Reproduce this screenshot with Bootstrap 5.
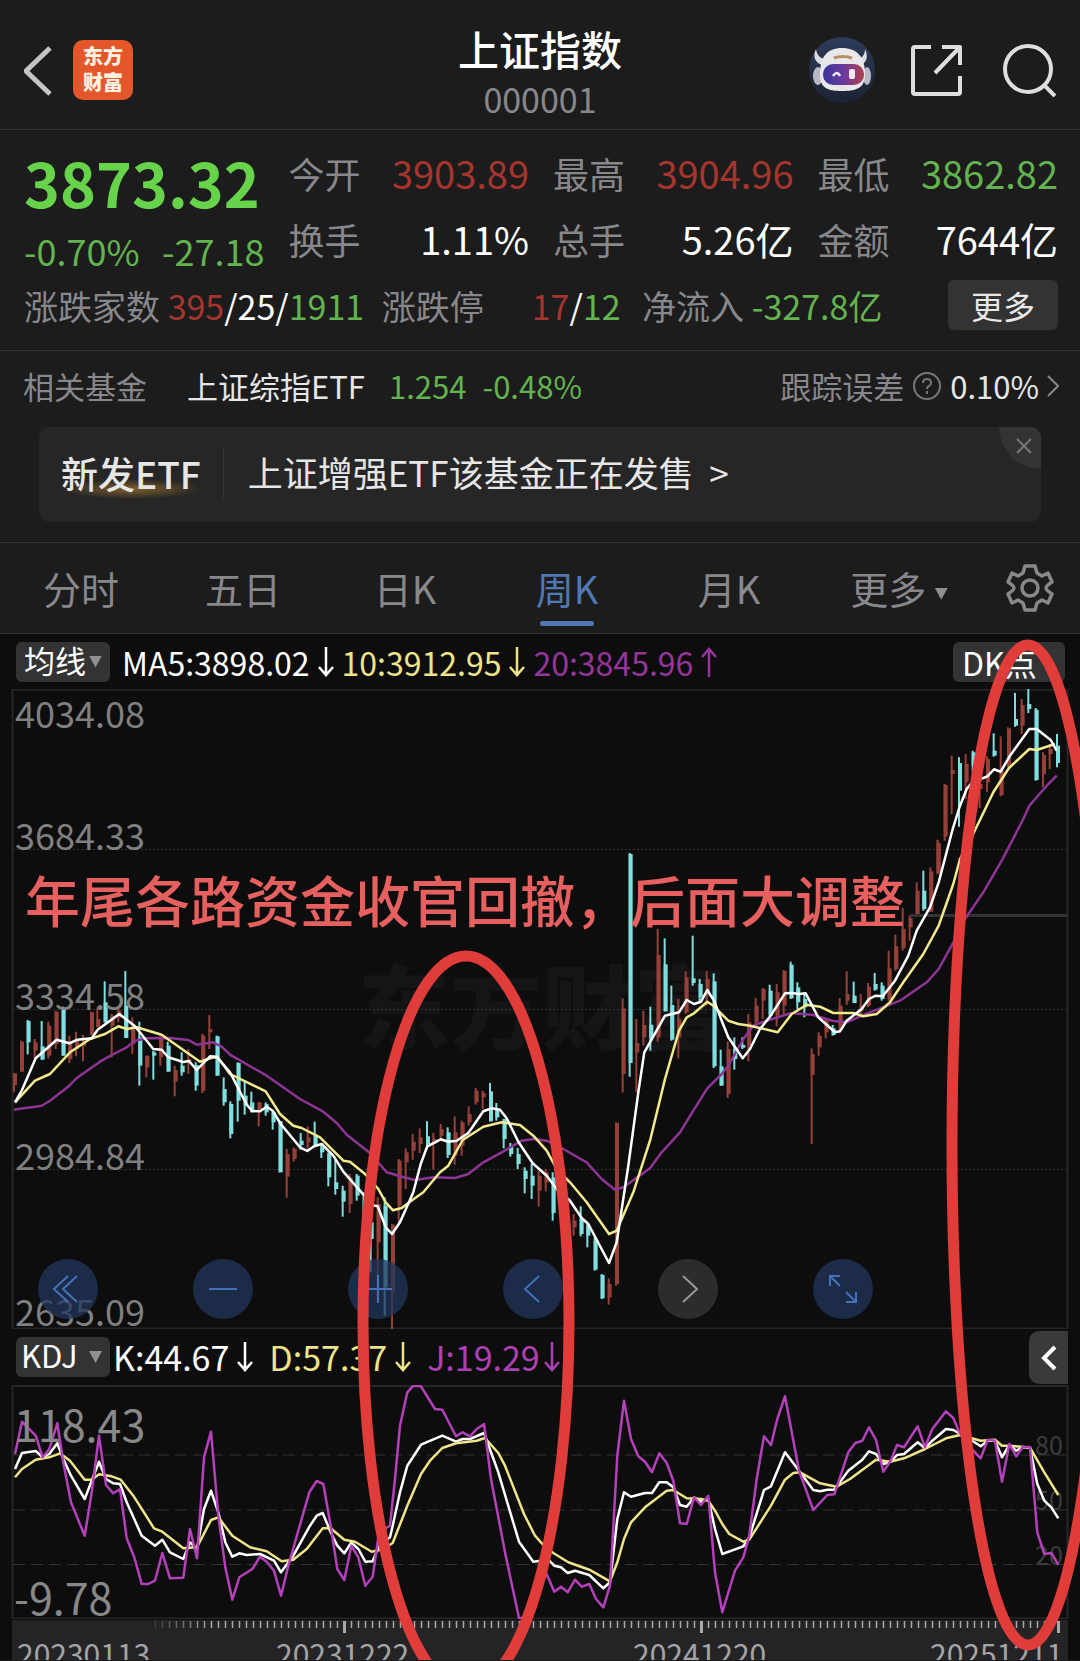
<!DOCTYPE html>
<html lang="zh-CN" data-bs-theme="dark">
<head>
<meta charset="utf-8">
<meta name="viewport" content="width=device-width, initial-scale=1">
<title>上证指数 000001</title>
<link href="https://cdn.jsdelivr.net/npm/bootstrap@5.3.0/dist/css/bootstrap.min.css" rel="stylesheet">
<style>
  body { background:#1c1c1c; color:#fff; font-family:"Noto Sans CJK SC",sans-serif; overflow-x:hidden; }
  a { color:inherit; text-decoration:none; }
  svg { display:block; flex:none; }
  button { background:none; border:0; padding:0; color:inherit; }
  .line-b { border-bottom:1px solid #333; }
  .muted { color:#88888c; }
  .up { color:#a5352d; }
  .down { color:#63b350; }
  .topbar { height:130px; padding:10px 24px 0; }
  .side { flex:1 1 0; }
  .brand { width:60px; height:60px; border-radius:10px; background:#e4572a; color:#fff3e4; font-size:20px; line-height:26px; font-weight:900; text-align:center; padding-top:3px; }
  .title { font-size:41px; line-height:54px; font-weight:500; margin:0; }
  .code { font-size:34px; line-height:48px; }
  .quote { height:221px; padding:10px 22px 0 24px; }
  .cells { display:grid; grid-template-columns:repeat(4,minmax(0,1fr)); grid-template-rows:66px 66px; column-gap:24px; height:140px; }
  .main-price { grid-row:span 2; white-space:nowrap; }
  .price { font-size:61px; line-height:84px; font-weight:700; color:#66d34b; }
  .delta { font-size:36px; line-height:52px; }
  .cell { height:66px; line-height:66px; font-size:36px; white-space:nowrap; }
  .cell .val { font-size:38px; }
  .breadth { height:50px; font-size:34px; white-space:nowrap; }
  .more-btn { width:110px; height:50px; border-radius:6px; background:#333; font-size:32px; line-height:46px; color:#e8e8e8; }
  .fund { height:76px; padding:0 21px 6px 23px; font-size:31px; white-space:nowrap; }
  .fund .name { color:#e6e6e6; }
  .promo { margin:0 39px 20px; height:95px; border-radius:10px; background:#262626; color:#e6e6e6; font-size:35px; padding:0 22px 4px; overflow:hidden; }
  .promo-tag { font-size:37px; font-weight:500; padding-right:22px; border-right:1px solid #333; line-height:52px; background:radial-gradient(closest-side,#80602e,transparent) 0 100%/142px 20px no-repeat; }
  .promo-close { top:0; right:0; width:42px; height:42px; background:#333; border-bottom-left-radius:42px; }
  .tabs { height:92px; border-top:1px solid #333; font-size:38px; color:#88888c; }
  .tabs .tab { flex:0 0 15%; text-align:center; line-height:90px; position:relative; }
  .tabs .active { color:#4f78b4; }
  .tabs .active::after { content:""; position:absolute; left:50%; bottom:7px; width:54px; height:5px; margin-left:-27px; border-radius:3px; background:#4f78b4; }
  .tri { display:inline-block; width:13px; height:12px; background:#909094; clip-path:polygon(0 0,100% 0,50% 100%); vertical-align:middle; }
  .board { background:#0d0d0d; }
  .ind { height:55px; padding:0 15px 0 16px; font-size:32px; line-height:50px; white-space:nowrap; }
  .ind-low { height:56px; font-size:34px; padding-right:12px; }
  .pick { position:relative; height:40px; margin-right:12px; }
  .pick select { display:block; appearance:none; height:40px; width:94px; border:0; border-radius:6px; background:#333; color:#fff; font-size:31px; line-height:36px; padding:0 0 4px 8px; }
  .ind-low .pick { margin-right:3px; }
  .ind-low .pick select { padding-left:5px; }
  .pick .tri { position:absolute; right:8px; top:14px; pointer-events:none; }
  .dk { width:112px; height:40px; background:#333; border-radius:6px; line-height:36px; padding-left:9px; text-align:left; }
  .fold { width:39px; height:53px; background:#3a3a3a; border-radius:10px 0 0 10px; }
  .yel { color:#efe489; } .pur { color:#95359a; } .mag { color:#ad40b4; }
  .pad { left:38px; bottom:10px; gap:95px; }
  .pad button { width:60px; height:60px; border-radius:50%; background:rgba(32,54,92,.75); color:#4472b8; }
  .pad .off { background:#2c2c2c; color:#98989c; }
  .note { inset:0; pointer-events:none; }
  svg text { font-family:"Noto Sans CJK SC",sans-serif; }
</style>
<script src="https://cdn.jsdelivr.net/npm/bootstrap@5.3.0/dist/js/bootstrap.bundle.min.js"></script>
</head>
<body>
<header class="topbar line-b d-flex align-items-center">
  <div class="side d-flex align-items-center gap-3">
    <a href="#" aria-label="返回"><svg width="33" height="54" viewBox="0 0 33 54" fill="none" stroke="#c4c4c4" stroke-width="5"><path d="M26 5 2 28 26 51"/></svg></a>
    <div class="brand">东方<br>财富</div>
  </div>
  <div class="text-center pt-1">
    <h1 class="title">上证指数</h1>
    <div class="code muted">000001</div>
  </div>
  <div class="side d-flex align-items-center justify-content-end">
    <button aria-label="助手" class="me-4"><svg width="68" height="68" viewBox="0 0 68 68">
      <defs><linearGradient id="visor"><stop offset="0" stop-color="#3a3799"/><stop offset=".5" stop-color="#6a3a9c"/><stop offset="1" stop-color="#b0404e"/></linearGradient>
      <linearGradient id="night" x2="0" y2="1"><stop offset="0" stop-color="#2d3b5a"/><stop offset="1" stop-color="#1c2233"/></linearGradient></defs>
      <circle cx="34" cy="34" r="33" fill="url(#night)"/>
      <path d="M8 13c-4 8 0 15 7 16l4-6c-6 0-10-3-11-10zM57 13c4 8 1 15-5 16l-5-6c6 0 10-3 10-10z" fill="#dcdce2"/>
      <ellipse cx="10" cy="40" rx="5" ry="9" fill="#b9b9c4"/><ellipse cx="59" cy="40" rx="4" ry="9" fill="#b9b9c4"/>
      <path d="M12 38c0-17 7-26 22-26s23 9 23 26c0 14-8 17-23 17s-22-3-22-17z" fill="#e9e7ea"/>
      <path d="M26 22q9-3 18 0" stroke="#b98d66" stroke-width="3" fill="none"/>
      <rect x="15" y="28" width="41" height="21" rx="10" fill="url(#visor)"/>
      <path d="M25 40q4-6 7 0" stroke="#eef" stroke-width="2.5" fill="none"/><rect x="41" y="33" width="6" height="10" rx="2" fill="#f3e8f2"/>
    </svg></button>
    <button aria-label="分享" class="ms-2 me-4"><svg width="54" height="54" viewBox="-2 0 54 54" fill="none" stroke="#dedede" stroke-width="4" stroke-linejoin="round"><path d="M21 4H5q-2 0-2 2v43q0 2 2 2h43q2 0 2-2V33M32 4h18v18M49 5 25 30"/></svg></button>
    <button aria-label="搜索" class="ms-3"><svg width="54" height="54" viewBox="-1 0 54 54" fill="none" stroke="#dedede" stroke-width="4"><circle cx="25" cy="26" r="23"/><path d="m41 42 11 11"/></svg></button>
  </div>
</header>

<section class="quote line-b">
  <div class="cells">
    <div class="main-price">
      <div class="price">3873.32</div>
      <div class="delta down d-flex justify-content-between"><span>-0.70%</span><span>-27.18</span></div>
    </div>
    <div class="cell d-flex justify-content-between"><span class="muted">今开</span><span class="val up">3903.89</span></div>
    <div class="cell d-flex justify-content-between"><span class="muted">最高</span><span class="val up">3904.96</span></div>
    <div class="cell d-flex justify-content-between"><span class="muted">最低</span><span class="val down">3862.82</span></div>
    <div class="cell d-flex justify-content-between"><span class="muted">换手</span><span class="val">1.11%</span></div>
    <div class="cell d-flex justify-content-between"><span class="muted">总手</span><span class="val">5.26亿</span></div>
    <div class="cell d-flex justify-content-between"><span class="muted">金额</span><span class="val">7644亿</span></div>
  </div>
  <div class="breadth d-flex align-items-center justify-content-between">
    <div><span class="muted">涨跌家数</span> <span class="up">395</span>/25/<span class="down">1911</span></div>
    <div class="d-flex gap-5"><span class="muted">涨跌停</span><span><span class="up">17</span>/<span class="down">12</span></span></div>
    <div class="ms-1"><span class="muted">净流入</span> <span class="down">-327.8亿</span></div>
    <button class="more-btn ms-5">更多</button>
  </div>
</section>

<section class="fund d-flex align-items-center">
  <span class="muted">相关基金</span>
  <a href="#" class="name ms-4 ps-3">上证综指ETF</a>
  <span class="down ms-4">1.254</span><span class="down ms-3">-0.48%</span>
  <span class="muted ms-auto">跟踪误差</span>
  <svg class="mx-2" width="30" height="30" viewBox="0 0 30 30" fill="none" stroke="#77777b" stroke-width="2"><circle cx="15" cy="15" r="13"/><path d="M11 12q0-4 4-4t4 4q0 2-2 3t-2 3M15 20v3"/></svg>
  <span class="name">0.10%</span>
  <svg class="ms-2" width="12" height="22" viewBox="0 0 12 22" fill="none" stroke="#88888c" stroke-width="2"><path d="m1 1 10 10L1 21"/></svg>
</section>

<section class="promo position-relative d-flex align-items-center">
  <span class="promo-tag">新发ETF</span>
  <a href="#" class="ms-4">上证增强ETF该基金正在发售 &nbsp;&gt;</a>
  <button class="promo-close position-absolute d-flex align-items-center justify-content-center" aria-label="关闭"><svg class="ms-2 mb-1" width="16" height="16" viewBox="0 0 16 16" stroke="#77777b" stroke-width="2"><path d="m1 1 14 14M15 1 1 15"/></svg></button>
</section>

<nav class="tabs line-b d-flex align-items-center">
  <a href="#" class="tab">分时</a><a href="#" class="tab">五日</a><a href="#" class="tab">日K</a>
  <a href="#" class="tab active" aria-current="page">周K</a><a href="#" class="tab">月K</a>
  <a href="#" class="tab ms-2">更多 <span class="tri ms-n1"></span></a>
  <button class="mx-auto" aria-label="设置"><svg width="48" height="48" viewBox="-24 -24 48 48" fill="none" stroke="#88888c" stroke-width="3.5" stroke-linejoin="round"><circle r="8"/><path d="M-5-22H5L7-15 12-12 18-15 22-6Q16-2 16 0T22 6L18 15 12 12 7 15 5 22H-5L-7 15-12 12-18 15-22 6Q-16 2-16 0T-22-6L-18-15-12-12-7-15Z"/></svg></button>
</nav>

<main class="board position-relative">
  <div class="ind d-flex align-items-center">
    <div class="pick"><select aria-label="主图指标"><option>均线</option></select><span class="tri"></span></div>
    <span>MA5:3898.02</span><svg class="mx-2" width="16" height="30" viewBox="0 0 16 30" fill="none" stroke="#fff" stroke-width="2.5"><path d="M8 0v28M1 20l7 8 7-8"/></svg>
    <span class="yel">10:3912.95</span><svg class="mx-2" width="16" height="30" viewBox="0 0 16 30" fill="none" stroke="#efe489" stroke-width="2.5"><path d="M8 0v28M1 20l7 8 7-8"/></svg>
    <span class="pur">20:3845.96</span><svg class="mx-2" width="16" height="30" viewBox="0 0 16 30" fill="none" stroke="#95359a" stroke-width="2.5"><path d="M8 30V2M1 10l7-8 7 8"/></svg>
    <button class="dk ms-auto">DK点</button>
  </div>

  <div class="position-relative">
    <svg class="w-100" viewBox="0 690 1080 640" role="img" aria-label="周K线">
      <text x="358" y="1044" font-size="92" font-weight="900" fill="#151515">东方财富</text>
      <g stroke="#333" stroke-dasharray="2 2"><path d="M13 850.5H1067M13 1010.5H1067M13 1170.5H1067"/></g>
      <path d="M12.500 690.500H1067.500V1329.500H12.500Z" fill="none" stroke="#262626" stroke-width="2"/>
      <path d="M910 916.500H1067" stroke="#333" stroke-width="3"/>
      <g id="candles"></g>
      <g id="averages" fill="none" stroke-width="2.500" stroke-linejoin="round"></g>
      <g font-size="36" fill="#888" fill-opacity=".95"><text x="15" y="729">4034.08</text><text x="15" y="851">3684.33</text><text x="15" y="1011">3334.58</text><text x="15" y="1171">2984.84</text><text x="15" y="1327">2635.09</text></g>
    </svg>
    <div class="pad position-absolute d-flex">
      <button aria-label="最早"><svg width="60" height="60" viewBox="0 0 60 60" fill="none" stroke="currentColor" stroke-width="2"><path d="M30 17 16 30l14 13M39 17 25 30l14 13"/></svg></button>
      <button aria-label="缩小"><svg width="60" height="60" viewBox="0 0 60 60" fill="none" stroke="currentColor" stroke-width="2"><path d="M16 30h28"/></svg></button>
      <button aria-label="放大"><svg width="60" height="60" viewBox="0 0 60 60" fill="none" stroke="currentColor" stroke-width="2"><path d="M16 30h28M30 16v28"/></svg></button>
      <button aria-label="左移"><svg width="60" height="60" viewBox="0 0 60 60" fill="none" stroke="currentColor" stroke-width="2"><path d="M36 17 22 30l14 13"/></svg></button>
      <button aria-label="右移" class="off"><svg width="60" height="60" viewBox="0 0 60 60" fill="none" stroke="currentColor" stroke-width="2"><path d="m25 17 14 13-14 13"/></svg></button>
      <button aria-label="全屏"><svg width="60" height="60" viewBox="0 0 60 60" fill="none" stroke="currentColor" stroke-width="2"><path d="M17 27V17h10M17 17l10 10M43 33v10H33M43 43 33 33"/></svg></button>
    </div>
  </div>

  <div class="ind ind-low d-flex align-items-center">
    <div class="pick"><select aria-label="副图指标"><option>KDJ</option></select><span class="tri"></span></div>
    <span>K:44.67</span><svg class="ms-2 me-3" width="16" height="30" viewBox="0 0 16 30" fill="none" stroke="#fff" stroke-width="2.5"><path d="M8 0v28M1 20l7 8 7-8"/></svg>
    <span class="yel">D:57.37</span><svg class="ms-2 me-3" width="16" height="30" viewBox="0 0 16 30" fill="none" stroke="#efe489" stroke-width="2.5"><path d="M8 0v28M1 20l7 8 7-8"/></svg>
    <span class="mag">J:19.29</span><svg class="ms-1" width="16" height="30" viewBox="0 0 16 30" fill="none" stroke="#ad40b4" stroke-width="2.5"><path d="M8 0v28M1 20l7 8 7-8"/></svg>
    <button class="fold ms-auto" aria-label="展开"><svg width="39" height="53" viewBox="0 0 39 53" fill="none" stroke="#fff" stroke-width="4"><path d="M26 16 15 27l11 11"/></svg></button>
  </div>

  <svg class="w-100" viewBox="0 1386 1080 234" role="img" aria-label="KDJ">
    <path d="M12.500 1387H1067.500V1619.500H12.500Z" fill="none" stroke="#262626" stroke-width="2"/>
    <path d="M13 1456H1067M13 1511H1067M13 1565.500H1067" stroke="#333" stroke-dasharray="12 6"/>
    <g font-size="25" fill="#3c3c3c"><text x="1035" y="1456">80</text><text x="1035" y="1511">50</text><text x="1035" y="1566">20</text></g>
    <g id="kdj" fill="none" stroke-width="2.500" stroke-linejoin="round"></g>
    <g font-size="43" fill="#888"><text x="14" y="1443">118.43</text><text x="14" y="1616">-9.78</text></g>
  </svg>

  <svg class="w-100" viewBox="0 1620 1080 41" role="img" aria-label="日期">
    <path d="M12 1621H1068V1661H12Z" fill="#242426"/>
    <g id="ticks" stroke="#a8a8a8" stroke-width="1"></g>
    <g font-size="30" fill="#a4a4a6"><text x="17" y="1667">20230113</text><text x="276" y="1667">20231222</text><text x="633" y="1667">20241220</text><text x="930" y="1667">20251211</text></g>
  </svg>

  <svg class="note position-absolute w-100 h-100" viewBox="0 635 1080 1026" aria-label="标注">
    <text x="25" y="923" font-size="55" font-weight="500" fill="#e5605e">年尾各路资金收官回撤，后面大调整</text>
    <g fill="none" stroke="#e03c3a" stroke-width="11"><ellipse cx="466" cy="1324" rx="103" ry="367"/><ellipse cx="1028" cy="1146" rx="76" ry="500"/></g>
  </svg>
</main>

<script>
// Each series is a list of panels: [origin x, origin y, values], values in thirds of a unit.
const candles = [
 [0,960,`45 343 343 378 400 r,66 245 248 338 338 r,86 183 186 250 286 c,107 240 250 275 300 r,128 186 262 302 302 c,148 188 200 290 298 r,170 155 158 255 270 r,191 143 152 290 290 c,211 230 250 300 312 r,231 218 245 270 292 r,252 228 245 260 307 r,276 158 160 228 228 r,295 145 180 205 205 r,317 67 130 190 190 c,338 165 170 200 295 r,358 150 155 175 190 r,379 36 140 237 237 c,400 175 205 255 285 r,421 188 235 320 380 c,442 290 290 325 355 r,463 275 280 290 362 c,484 225 235 295 320 r,506 248 260 338 338 c,527 320 333 368 412 r,548 280 320 340 350 c,568 270 300 315 345 r,590 310 318 380 395 c,610 225 230 395 402 r,631 168 210 220 270 r,653 230 232 350 350 c,674 355 390 430 440 c,694 427 435 525 538 c,716 310 312 425 488 c,737 365 410 440 467 c,757 398 430 460 460 c,779 430 430 450 502 r,800 430 435 460 470 c,821 455 460 490 512 c,842 485 487 640 640 c,863 570 585 653 716 r,884 565 570 600 607 r,905 522 545 558 572 c,926 503 535 550 570 r,947 488 530 560 560 c,967 555 565 580 597 c,988 580 585 655 682 c,1009 600 670 690 707 c,1031 680 695 728 773 c,1052 645 655 735 762 r,1073 645 650 710 725 c,1094 700 715 790 800 c,1115 785 790 840 940 c,1136 715 735 850 1030 r,1157 715 740 985 1070 c,1179 795 797 1000 1112 r`],
 [340,960,`179 600 605 740 790 r,200 568 580 610 690 r,221 525 548 575 602 r,242 508 535 555 582 r,264 487 532 555 560 c,283 522 540 555 632 r,305 495 510 530 545 r,326 505 520 588 597 c,347 472 520 590 617 r,368 485 490 560 590 r,389 442 465 490 500 r,410 387 395 430 437 r,431 395 402 415 450 r,453 372 397 487 487 c,472 432 450 475 485 c,494 480 480 540 568 c,514 552 560 585 593 c,536 567 585 615 630 c,557 625 635 660 703 c,578 615 650 680 720 c,599 635 650 695 743 r,620 630 640 670 697 r,641 640 655 762 785 c,704 765 785 805 830 r,725 742 780 825 832 c,745 795 800 830 865 c,767 835 845 932 935 c,788 945 948 1018 1020 c,809 958 975 1015 1037 r,831 490 492 975 980 r,851 118 148 345 400 r`],
 [600,820,`92 102 105 732 773 c,112 600 672 700 820 r,133 575 618 655 680 r,154 563 617 657 695 c,176 330 408 655 668 r,197 358 436 577 577 c,217 500 558 662 665 c,238 540 600 655 718 r,260 457 475 580 585 r,281 350 478 492 500 c,302 480 495 535 550 c,323 457 480 530 560 r,344 463 487 742 747 c,365 692 742 800 800 c,386 667 690 825 837 r,406 655 690 720 752 c,430 655 678 686 690 c,448 585 610 680 727 r,470 537 560 610 620 r,491 507 510 545 600 r,512 497 515 590 590 c,533 495 520 590 622 r,554 453 455 560 590 r,575 428 437 538 540 c,595 490 505 550 570 c,616 520 540 565 595 c,638 688 705 768 975 r,659 640 650 685 710 r,680 600 605 640 658 r,701 618 628 648 650 c,722 537 560 630 640 r,743 457 525 545 558 r,764 488 530 552 552 c,785 525 560 575 595 r,807 492 503 560 565 r,827 462 495 512 515 c,848 490 500 540 545 c,869 395 448 540 545 r,889 347 382 450 455 r,911 267 330 388 395 r,932 290 297 325 365 r,953 190 215 285 285 r,973 155 215 270 275 c,994 145 157 278 278 r,1016 62 75 160 165 r`],
 [780,640,`476 603 612 703 705 r,497 435 438 592 605 r,518 350 393 405 525 r,540 355 372 455 563 c,560 345 375 430 480 r,581 335 340 380 400 c,602 430 435 450 507 r,624 352 360 430 458 r,644 283 335 350 353 c,665 292 395 468 472 r,687 265 268 380 385 r,708 162 240 260 263 c,728 180 198 260 285 r,748 150 195 210 222 c,770 207 212 423 425 c,792 340 348 405 445 r,812 315 330 345 390 r,834 285 320 372 385 c`]
];
const averages = {
 '#8e3494': [[0,960,'42 452 70 448 100 444 125 440 150 425 208 380 230 357 300 308 335 288 380 265 405 245 440 238 510 237 565 243 590 257 640 250 665 263 690 287 800 350 900 420 970 458 1010 492 1040 527 1110 582 1160 640'],[340,960,'180 652 225 663 280 655 345 657 385 645 430 610 485 580 545 545 580 540 620 545 670 570 740 610 785 660 825 692 850 685 930 628 965 580 1020 520 1060 455 1102 388'],[600,820,'365 765 385 740 430 660 460 620 500 605 575 582 640 588 700 606 740 610 785 590 900 545 980 490 1016 450 1060 370 1095 300 1150 220 1205 125'],[780,640,'730 540 748 500 800 440 830 410']],
 '#f4ea8e': [[0,960,'45 430 105 365 150 345 210 280 270 240 315 225 355 202 380 210 410 205 485 227 600 308 640 295 655 297 690 345 797 397 840 465 880 500 905 507 960 535 1030 605 1050 608 1095 645 1135 690 1157 730 1179 754'],[340,960,'185 747 210 728 250 700 300 640 325 620 368 543 430 503 485 490 540 498 580 530 620 575 650 630 690 670 740 730 807 825 830 815 880 700 930 545 975 360 1017 215 1040 175 1062 163 1102 128'],[600,820,'340 560 385 605 415 615 450 620 533 640 575 585 620 557 660 563 700 582 760 582 790 592 830 585 870 550 910 490 970 405 1016 320 1060 195'],[780,640,'540 660 582 580 640 460 687 387 748 330 770 333 825 315']],
 '#ffffff': [[0,960,'45 430 66 393 107 298 170 242 208 253 232 242 275 238 293 212 358 165 405 202 460 270 485 272 505 295 550 309 567 306 590 333 630 292 650 293 690 340 740 437 757 456 780 457 800 443 818 455 842 495 900 565 922 576 942 562 965 555 1000 590 1030 638 1095 712 1115 738 1133 742 1157 805 1176 825'],[340,960,'180 790 200 745 220 700 242 615 262 562 302 541 325 548 350 545 385 522 430 457 455 448 480 452 500 478 535 548 578 613 620 650 650 690 690 725 725 777 745 795 807 912 830 850 865 620 895 400 913 280 975 170 1017 160 1040 123 1062 135 1083 128 1102 93 1122 125 1145 185'],[600,820,'385 655 428 718 450 690 480 630 512 590 555 523 575 522 598 525 617 523 655 595 705 640 720 637 740 605 785 570 807 540 827 530 848 532 885 485 925 410 950 335 990 265'],[780,640,'476 730 518 570 540 500 560 450 580 425 610 417 622 412 642 391 662 398 690 350 748 270 770 270 812 303 830 335']]
};
const kdj = {
 '#ffffff': [[0,1320,'45 450 66 402 107 396 128 415 148 405 172 373 190 420 213 470 254 540 297 428 318 480 340 493 360 495 380 550 425 650 465 680 487 662 510 700 550 720 570 670 591 690 612 570 633 515 655 580 676 670 697 713 718 703 740 708 780 705 822 725 843 760 880 710 930 620 950 590 968 582 992 640 1012 680 1033 703 1054 670 1075 690 1096 728 1118 727 1137 680 1170 655'],[380,1320,'38 620 60 520 82 440 123 377 187 350 228 368 248 360 270 360 312 342 333 400 355 460 417 668 460 728 505 722 523 740 543 745 563 762 585 755 628 768 670 808 690 790 712 600 732 520 753 533 795 522 816 522 838 490 860 490 880 505 900 558 920 563 942 535 963 548 985 540 1005 630 1027 705 1090 682 1108 655 1152 513 1173 502'],[700,1320,'255 400 297 455 340 513 360 517 382 512 403 512 445 455 487 422 507 397 528 405 550 435 572 428 591 408 612 405 653 370 675 388 697 365 738 330 760 333 800 355 842 382 863 365 885 365 906 415 928 378 949 395 968 384 990 386 1012 495 1033 545 1054 565 1075 598']],
 '#efe489': [[0,1320,'45 475 66 450 107 422 148 415 180 403 210 425 254 482 275 482 297 466 335 472 362 482 400 530 462 628 487 638 550 688 591 685 633 603 655 595 697 650 750 685 800 697 845 727 880 722 920 690 968 628 992 628 1033 662 1065 668 1115 698 1150 690'],[380,1320,'38 672 82 560 123 465 150 425 187 387 228 373 290 365 315 357 355 402 375 440 432 585 465 650 490 678 520 702 565 730 628 752 690 787 712 730 732 660 753 610 795 565 860 515 880 513 920 538 963 540 985 545 1005 575 1027 615 1048 645 1090 668 1108 662 1173 560'],[700,1320,'255 482 280 462 300 460 360 493 410 503 450 480 528 422 570 428 612 418 675 390 738 358 780 348 842 365 885 362 906 380 928 380 968 384 990 386 1033 460 1075 528']],
 '#b440ba': [[0,1320,'45 405 66 308 107 350 128 415 148 390 172 313 190 430 213 550 254 650 275 520 297 350 318 498 340 523 360 510 380 658 403 715 425 795 445 795 465 785 487 702 510 778 550 776 570 630 591 718 612 415 633 338 655 590 676 745 697 842 718 775 757 750 780 713 800 728 822 755 843 830 865 740 928 520 950 486 970 495 992 620 1012 750 1033 783 1054 680 1075 715 1096 800 1118 773 1137 640'],[380,1320,'30 620 45 480 60 320 82 220 100 200 123 202 165 270 187 272 228 352 248 340 270 352 290 330 312 315 333 480 375 700 417 897 440 897 480 800 500 765 523 818 543 803 563 820 585 782 605 803 628 795 648 840 670 865 690 800 712 410 732 245 753 360 775 412 795 428 816 460 838 403 860 432 880 485 900 613 920 615 942 535 963 558 985 530 1005 760 1027 880 1065 755 1090 715 1108 650 1130 480 1152 352 1173 378'],[700,1320,'232 300 255 232 297 455 340 573 382 528 403 526 445 400 466 372 487 365 507 325 528 363 550 458 572 425 591 378 612 385 653 322 675 385 697 330 738 277 760 297 778 340 800 370 820 395 842 418 863 362 885 365 906 488 928 375 949 412 968 384 990 384 1012 640 1033 705 1054 702 1075 737']]
};
const tone = { r:'#96403a', c:'#7fdfdf' };
document.getElementById('candles').innerHTML = candles.map(([ox,oy,rows]) => rows.split(',').map(row => {
  const [x,hi,top,bot,lo,k] = row.split(' ');
  const cx = ox + x/3, y = v => oy + v/3;
  return `<path d="M${cx-1} ${y(hi)}V${y(lo)}" stroke="${tone[k]}" stroke-width="2"/><path d="M${cx} ${y(top)}V${y(bot)}" stroke="${tone[k]}" stroke-width="4"/>`;
}).join('')).join('');
const draw = (id, set) => {
  document.getElementById(id).innerHTML = Object.entries(set).map(([color, panels]) => {
    const pts = panels.flatMap(([ox,oy,s]) => { const n = s.split(' '), out = []; for (let i=0;i<n.length;i+=2) out.push((ox+n[i]/3).toFixed(1)+','+(oy+n[i+1]/3).toFixed(1)); return out; });
    return `<polyline stroke="${color}" points="${pts.join(' ')}"/>`;
  }).join('');
};
draw('averages', averages);
draw('kdj', kdj);
let t = '';
for (let i = 20; i < 150; i++) {
  const x = 15.5 + 7*i, major = i === 47 || i === 98 || i === 149;
  t += `<path d="M${x} 1622V${major ? 1634 : 1629}" stroke-width="${major ? 3 : 1.5}" opacity="${Math.min(1,(i-18)/10)}"/>`;
}
document.getElementById('ticks').innerHTML = t;
</script>
</body>
</html>
